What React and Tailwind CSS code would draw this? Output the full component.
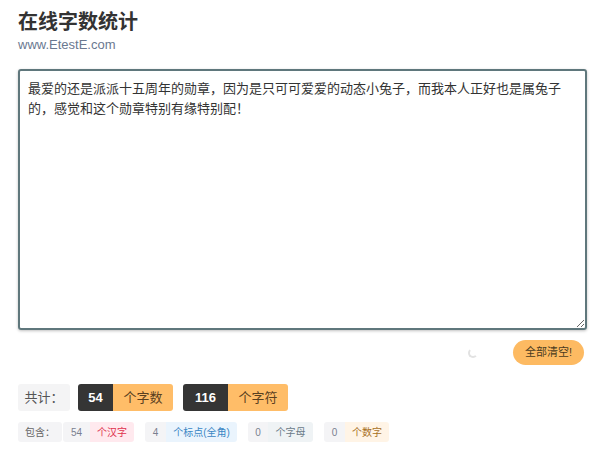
import React from 'react';

const text =
  '最爱的还是派派十五周年的勋章，因为是只可可爱爱的动态小兔子，而我本人正好也是属兔子的，感觉和这个勋章特别有缘特别配！';

export default function App() {
  return (
    <div
      className="min-h-[449px] w-[600px] bg-white px-[18px] pt-[8px] text-[#333]"
      style={{ fontFamily: '"Liberation Sans", "Noto Sans CJK SC", sans-serif' }}
    >
      <h1 className="text-[20px] font-bold leading-[28px] text-[#333]">在线字数统计</h1>
      <p className="mt-[1px] text-[13px] leading-[16px] text-[#6a7890]">www.EtestE.com</p>

      <textarea
        className="mt-[16px] block h-[261px] w-[569px] resize rounded-[3px] border-2 border-[#5f777c] px-[8px] py-[8px] text-[13px] leading-[20px] text-[#333] shadow-[0_1px_3px_rgba(0,0,0,0.25)] outline-none"
        defaultValue={text}
      />

      <div className="mr-[-2px] mt-[10px] flex h-[25px] items-center justify-end gap-[35px]">
        <span className="h-[10px] w-[10px] rounded-full border-2 border-[#e2e2e2] border-r-transparent border-t-transparent" />
        <button className="h-[25px] w-[71px] rounded-full bg-[#fdba62] text-[11px] text-[#4a3a20]">
          全部清空!
        </button>
      </div>

      <div className="mt-[19px] flex h-[27px] items-stretch gap-[10px] text-[13px]">
        <div className="flex w-[52px] items-center justify-center rounded-[3px] bg-[#f4f4f5] text-[#555]">共计：</div>
        <div className="ml-[-2px] flex overflow-hidden rounded-[3px]">
          <span className="flex w-[35px] items-center justify-center bg-[#353535] font-bold text-white">54</span>
          <span className="flex w-[60px] items-center justify-center bg-[#ffbd68] text-[#5a4020]">个字数</span>
        </div>
        <div className="flex overflow-hidden rounded-[3px]">
          <span className="flex w-[45px] items-center justify-center bg-[#353535] font-bold text-white">116</span>
          <span className="flex w-[60px] items-center justify-center bg-[#ffbd68] text-[#5a4020]">个字符</span>
        </div>
      </div>

      <div className="mt-[11px] flex h-[20px] items-stretch gap-[11px] text-[10px]">
        <div className="flex items-stretch gap-[1px]">
          <span className="flex w-[44px] items-center justify-center rounded-[3px] bg-[#f4f4f6] text-[#666]">包含：</span>
          <div className="flex overflow-hidden rounded-[3px]">
            <span className="flex w-[27px] items-center justify-center bg-[#f4f4f6] text-[#7a8090]">54</span>
            <span className="flex w-[44px] items-center justify-center bg-[#ffe9ee] text-[#e0304c]">个汉字</span>
          </div>
        </div>
        <div className="flex overflow-hidden rounded-[3px]">
          <span className="flex w-[21px] items-center justify-center bg-[#f4f4f6] text-[#7a8090]">4</span>
          <span className="flex w-[71px] items-center justify-center bg-[#eaf4fd] text-[#3a86c4]">个标点(全角)</span>
        </div>
        <div className="flex overflow-hidden rounded-[3px]">
          <span className="flex w-[20px] items-center justify-center bg-[#f4f4f6] text-[#7a8090]">0</span>
          <span className="flex w-[45px] items-center justify-center bg-[#eff3f5] text-[#6a7a88]">个字母</span>
        </div>
        <div className="flex overflow-hidden rounded-[3px]">
          <span className="flex w-[21px] items-center justify-center bg-[#f4f4f6] text-[#7a8090]">0</span>
          <span className="flex w-[44px] items-center justify-center bg-[#fff4e6] text-[#a8701e]">个数字</span>
        </div>
      </div>
    </div>
  );
}
